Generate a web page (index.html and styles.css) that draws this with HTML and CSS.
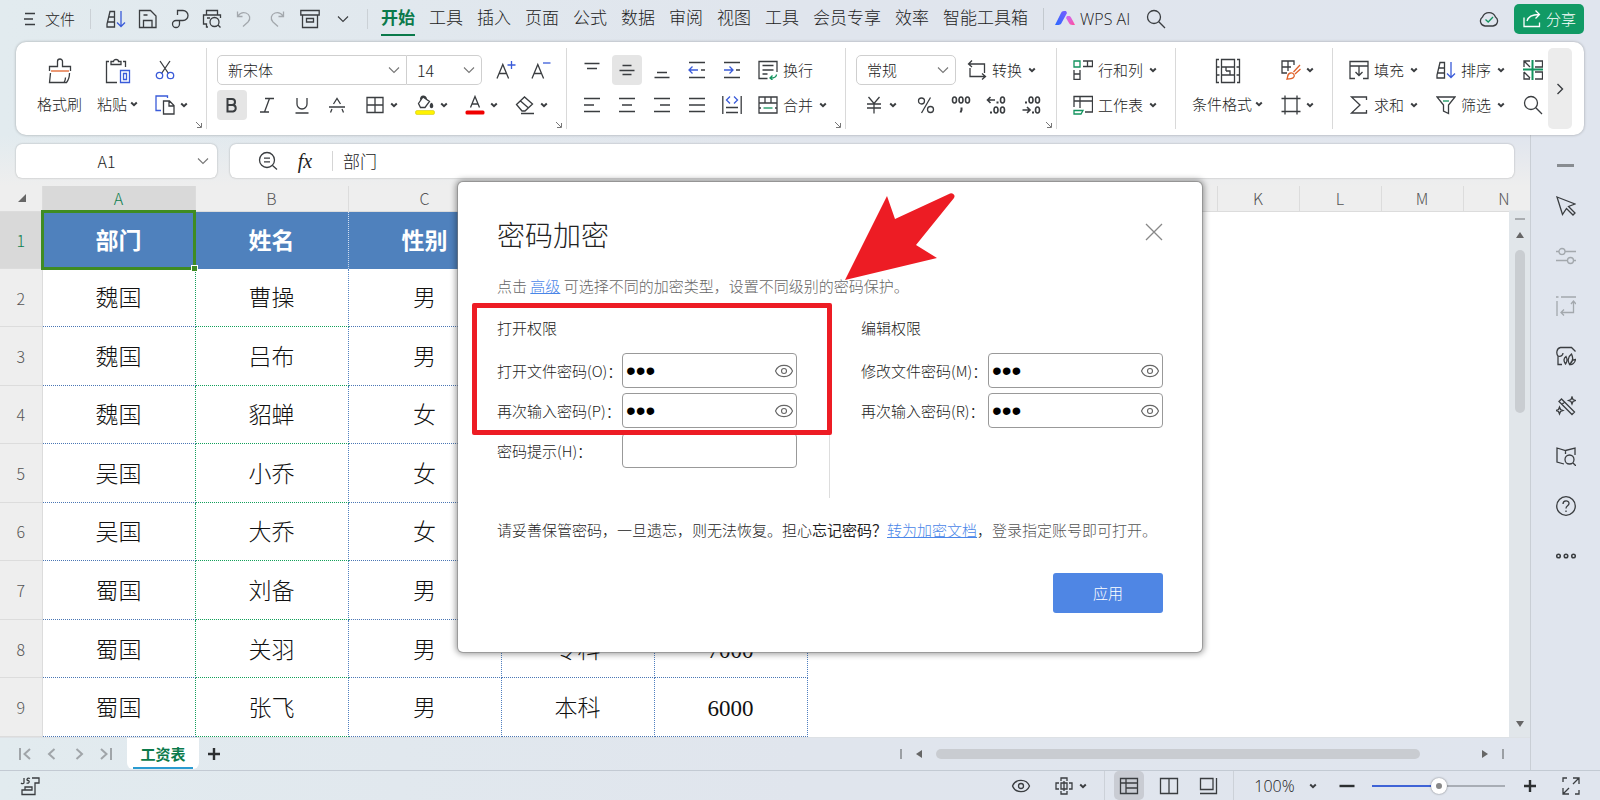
FILE: index.html
```html
<!DOCTYPE html>
<html lang="zh-CN">
<head>
<meta charset="UTF-8">
<title>工资表</title>
<link rel="stylesheet" href="styles.css">
</head>
<body>
<!-- Icon sprite -->
<svg class="sprite" aria-hidden="true">
<defs>
<linearGradient id="ai-blue" x1="0" y1="1" x2="1" y2="0"><stop offset="0" stop-color="#2b6bff"/><stop offset="1" stop-color="#7a5cff"/></linearGradient>
<linearGradient id="ai-pink" x1="0" y1="0" x2="1" y2="1"><stop offset="0" stop-color="#c86bff"/><stop offset="1" stop-color="#ff4f9a"/></linearGradient>
</defs>
<symbol id="caret" viewBox="0 0 8 8"><path d="M1.2 2.6 4 5.2 6.8 2.6" stroke-width="2"/></symbol>
<symbol id="chevron" viewBox="0 0 12 12"><path d="M1 3.5 6 8.5 11 3.5"/></symbol>
<symbol id="launcher" viewBox="0 0 8 8"><path d="M1 1 6 6M6.5 2V6.5H2"/></symbol>
<symbol id="menu" viewBox="0 0 20 20"><path d="M5 4.5H15M4 10H13M5 15.5H15"/></symbol>
<symbol id="sort" viewBox="0 0 20 20"><path d="M1 18V15L4 2.500H8.500V18ZM3 8H8.500M2 13H8.500"/><path class="blue" d="M15 2V17M11 13.500 15 17.500 19 13.500"/></symbol>
<symbol id="save" viewBox="0 0 20 20"><path d="M1.500 1.500H12.500L18 7V18.500H1.500ZM5.500 18V11.500H14V18M5.500 6H9.500"/></symbol>
<symbol id="pdf" viewBox="0 0 20 20"><path d="M7.500 6V1.500H13A5 5 0 0 1 13 11.500H6A3.500 3.500 0 1 0 9.500 15V11.500"/></symbol>
<symbol id="preview" viewBox="0 0 20 20"><path d="M4.500 6V1.500H15.500V6M6 18H4.500V15H1.500V6H18.500V9M5 9H8M16 16 18.500 18.500"/><circle cx="12.500" cy="13" r="4.500"/></symbol>
<symbol id="undo" viewBox="0 0 20 20"><path d="M3.500 2.500V7.500H8.500M4 7C6 4 9 3 12 4C16 5.500 17 10 14 13L9 17.500"/></symbol>
<symbol id="redo" viewBox="0 0 20 20"><path d="M16.500 2.500V7.500H11.500M16 7C14 4 11 3 8 4C4 5.500 3 10 6 13L11 17.500"/></symbol>
<symbol id="archive" viewBox="0 0 20 20"><path d="M.8 1.500H19.200V6H.8ZM2.500 6V18.500H17.500V6M6.500 9.500H13.500V13H6.500Z"/></symbol>
<symbol id="search" viewBox="0 0 20 20"><circle cx="8" cy="8" r="6.500"/><path d="M12.800 12.800 19 19"/></symbol>
<symbol id="cloud" viewBox="0 0 20 20"><path d="M6 17A5 5 0 0 1 3.500 8A7 7 0 0 1 16.500 8A5 5 0 0 1 14 17Z"/><path class="green" d="M6.500 10.500 9.200 13 14 8"/></symbol>
<symbol id="share" viewBox="0 0 20 20"><path d="M2 8.500V17.500H17.500V13.500M5 12C6 8 9 5.500 17 5.500M13.500 1.500 17.500 5.500 13.500 9.500"/></symbol>
<symbol id="painter" viewBox="0 0 26 26"><path d="M2.500 13V8.500H10.500V3.500A2.500 2.500 0 0 1 15.500 3.500V8.500H23.500V13M3.500 15 2.500 24.500H19.500C21.500 22 22.500 19 22.500 15M17 24.500C18 23 18.500 21.500 18.500 19.500"/><path class="orange" d="M4 13H22"/></symbol>
<symbol id="paste" viewBox="0 0 26 26"><path d="M4 3.500H1.500V24.500H12M18 3.500H20.500V9M6 6.500V3.500H8.500C8.500 .8 13.500 .8 13.500 3.500H16V6.500Z"/><path class="blue" d="M15.500 12.500H24.500V24.500H15.500ZM18.500 15.500H21.500V21.500H18.500Z"/></symbol>
<symbol id="cut" viewBox="0 0 20 20"><path d="M5 1 13.500 13.500M15 1 6.500 13.500"/><circle class="blue" cx="4.500" cy="15.500" r="3.200"/><circle class="blue" cx="15.500" cy="15.500" r="3.200"/></symbol>
<symbol id="copy" viewBox="0 0 20 20"><path class="blue" d="M12.500 3V1H1V15.500H6"/><path d="M8.500 6H14.500L19 10.500V19H8.500ZM14 6.500V11H19"/></symbol>
<symbol id="bigger" viewBox="0 0 20 20"><path d="M1 18.500 6.800 4.500 12.600 18.500M3.200 13.500H10.400"/><path class="blue" d="M11.500 5H19.500M15.500 1V9"/></symbol>
<symbol id="smaller" viewBox="0 0 20 20"><path d="M1 18.500 6.800 4.500 12.600 18.500M3.200 13.500H10.400"/><path class="blue" d="M12 3H19.500"/></symbol>
<symbol id="bold" viewBox="0 0 20 20"><path stroke-width="2" d="M5.500 4V16.500H11A3.300 3.300 0 0 0 11 10H5.500H10A3 3 0 0 0 10 4Z"/></symbol>
<symbol id="italic" viewBox="0 0 20 20"><path d="M8 3.500H17M3 17H12M12.500 3.500 7.500 17"/></symbol>
<symbol id="underline" viewBox="0 0 20 20"><path d="M5 3V9A5 5 0 0 0 15 9V3M3.500 18H16.500"/></symbol>
<symbol id="strike" viewBox="0 0 20 20"><path d="M6.500 9 10 3.500 13.500 9M2 12H18M5 14 3.500 17.500M15 14 16.500 17.500"/></symbol>
<symbol id="borders" viewBox="0 0 20 20"><path d="M2 2.500H18V17.500H2ZM10 2.500V17.500M2 10H18"/></symbol>
<symbol id="fill-color" viewBox="0 0 20 20"><path d="M8 2 14.500 6.500 10 12.500H5.500L3.500 8.500ZM5.500 4.500C6 .5 10 0 11.500 4"/><path class="solid" d="M16.500 8C14.500 11 15.500 12.500 16.500 12.500S18.500 11 16.500 8"/><rect class="yellow" x=".5" y="15.500" width="19" height="4" rx="1.500"/></symbol>
<symbol id="font-color" viewBox="0 0 20 20"><path d="M5.500 12.500 10 1.500 14.500 12.500M7 9H13"/><rect class="red" x=".5" y="15.500" width="19" height="4" rx="1.500"/></symbol>
<symbol id="eraser" viewBox="0 0 20 20"><path d="M1.500 9.500 9.500 2 17.500 9 10 16H7ZM5.500 6 13.500 13M6 18.500H19"/></symbol>
<symbol id="v-top" viewBox="0 0 20 20"><path d="M2.500 3.500H17.500M5 8.500H15"/></symbol>
<symbol id="v-mid" viewBox="0 0 20 20"><path d="M5.500 5.500H14.500M2.500 10.500H17.500M5.500 14.500H14.500"/></symbol>
<symbol id="v-bottom" viewBox="0 0 20 20"><path d="M5 12.500H15M2.500 17.500H17.500"/></symbol>
<symbol id="outdent" viewBox="0 0 20 20"><path d="M2 2.500H18M14 10H18M2 17.500H18"/><path class="blue" d="M11 10H2M5.500 6.500 2 10 5.500 13.500"/></symbol>
<symbol id="indent" viewBox="0 0 20 20"><path d="M2 2.500H18M14 10H18M2 17.500H18"/><path class="blue" d="M2 10H11M7.500 6.500 11 10 7.500 13.500"/></symbol>
<symbol id="a-left" viewBox="0 0 20 20"><path d="M2 3.500H18M2 10H12M2 16.500H18"/></symbol>
<symbol id="a-center" viewBox="0 0 20 20"><path d="M2 3.500H18M5 10H15M2 16.500H18"/></symbol>
<symbol id="a-right" viewBox="0 0 20 20"><path d="M2 3.500H18M8 10H18M2 16.500H18"/></symbol>
<symbol id="a-justify" viewBox="0 0 20 20"><path d="M2 3.500H18M2 10H18M2 16.500H18"/></symbol>
<symbol id="distribute" viewBox="0 0 20 20"><path d="M.8 1V19M19.200 1V19M4 12.500H16M4 17.500H16"/><path class="blue" d="M8 1.500 4.500 5 8 8.500M12 1.500 15.500 5 12 8.500"/></symbol>
<symbol id="wrap" viewBox="0 0 20 20"><path d="M9.500 18.500H1V1.500H19V12M4.500 5.500H15.500M4.500 10H15.500M4.500 14H9.500"/><path class="green" d="M18.500 14.500C18.500 17.500 16 18 12.500 18M14.500 15.500 12 18 14.500 20"/></symbol>
<symbol id="merge" viewBox="0 0 20 20"><path d="M1 2H19V18H1ZM1 8H19M7 2V8M13 2V8M1 13H3M17 13H19"/><path class="green" d="M5.500 13H14.500"/></symbol>
<symbol id="convert" viewBox="0 0 20 20"><path d="M5 .5 1.500 4 5 7M2 4H17.500V13M15 13.500 18.500 16.500 15 19.500M18 16.500H3V8"/></symbol>
<symbol id="yuan" viewBox="0 0 20 20"><path d="M4.500 2 10 8.500 15.500 2M3 9H17M3 13H17M10 9V18.500"/></symbol>
<symbol id="percent" viewBox="0 0 20 20"><circle cx="5.500" cy="6" r="3"/><circle cx="14.500" cy="14.500" r="3"/><path d="M14.500 2.500 5.500 18"/></symbol>
<symbol id="thousand" viewBox="0 0 20 20"><g stroke-width="1.600"><ellipse cx="3.500" cy="5" rx="2" ry="3"/><ellipse cx="10" cy="5" rx="2" ry="3"/><ellipse cx="16.500" cy="5" rx="2" ry="3"/></g><path stroke-width="2" d="M10.500 12.500V15L9.500 17.500"/></symbol>
<symbol id="inc-decimal" viewBox="0 0 20 20"><g stroke-width="1.600"><path d="M9 5H1.500M4.500 2 1.500 5 4.500 8"/><ellipse cx="16.500" cy="5" rx="2" ry="3"/><ellipse cx="10" cy="15" rx="2" ry="3"/><ellipse cx="16.500" cy="15" rx="2" ry="3"/></g><path stroke-width="2" d="M11.500 6.500V8.500M5 16.500V18.500"/></symbol>
<symbol id="dec-decimal" viewBox="0 0 20 20"><g stroke-width="1.600"><path d="M1.500 15H9M6 12 9 15 6 18"/><ellipse cx="16.500" cy="15" rx="2" ry="3"/><ellipse cx="10" cy="5" rx="2" ry="3"/><ellipse cx="16.500" cy="5" rx="2" ry="3"/></g><path stroke-width="2" d="M12 16.500V18.500M5 6.500V8.500"/></symbol>
<symbol id="rows-cols" viewBox="0 0 20 20"><path class="green" d="M1 1H7V7H1Z"/><path d="M10 1H19.500V6.500H10M14.500 1V6.500M1 10V19.500H7V10M1 14H7"/></symbol>
<symbol id="worksheet" viewBox="0 0 20 20"><path d="M1 12V1.500H19.500V17H12M1 6H19.500M7 1.500V13"/><path class="green" d="M1 15.500H10L8 19H1Z"/></symbol>
<symbol id="condition" viewBox="0 0 26 26"><path d="M4 1.500H1.500V24.500H4M22 1.500H24.500V24.500H22M1.500 9H4.500M1.500 17H4.500M21.500 9H24.500M21.500 17H24.500M6.500 1.500H19.500V9H6.500ZM6.500 9V17H19.500V9M11 13V9M11 13H15V17M6.500 17V24.500H19.500V17"/></symbol>
<symbol id="table-style" viewBox="0 0 20 20"><path d="M6 13H1V1H13V5M1 7H10M7 1V11"/><path class="orange" d="M19 5 12.500 12M19.500 9 14 14M6 19C7 17 6 13.500 9.500 13C12.500 12.500 14.500 15.500 12.500 17.500C11 19 8.500 19 6 19Z"/></symbol>
<symbol id="frame" viewBox="0 0 20 20"><path d="M4 .5V19.500M16 .5V19.500M.5 3.500H19.500M.5 16.500H19.500"/></symbol>
<symbol id="fill" viewBox="0 0 20 20"><path d="M6 18.500H1V1.500H19V18.500H14M1 6H19M10 6V15.500M6.500 12 10 15.500 13.500 12"/></symbol>
<symbol id="sum" viewBox="0 0 20 20"><path d="M17.500 5V2H2.500L11 10 2.500 18H17.500V15"/></symbol>
<symbol id="filter" viewBox="0 0 20 20"><path d="M1 2H19L12.500 10V18.500L7.500 16V10Z"/><path class="green" d="M7 6H13"/></symbol>
<symbol id="freeze" viewBox="0 0 20 20"><path d="M1 7V1H7M12 1H19.500V7H12M1 12V19H7M12 12H19.500V19H12M1 1 7 7M1 12 7 18"/><path class="green" stroke-width="2" d="M0 9.500H20M9.500 0V20"/></symbol>
<symbol id="eye" viewBox="0 0 20 20"><path d="M1.500 10C4.500 2.500 15.500 2.500 18.500 10C15.500 17.500 4.500 17.500 1.500 10Z"/><circle cx="10" cy="10" r="2.500"/></symbol>
<symbol id="focus" viewBox="0 0 20 20"><path d="M7 5V2H13V5M7 15V18H13V15M5 7H2V13H5M15 7H18V13H15M7 7H13V13H7ZM10 5V15"/></symbol>
<symbol id="v-normal" viewBox="0 0 20 20"><path d="M1.500 2.500H18.500V17.500H1.500ZM1.500 7H18.500M7 2.500V17.500M7 12H18.500"/></symbol>
<symbol id="v-page" viewBox="0 0 20 20"><path d="M1.500 2.500H18.500V17.500H1.500ZM10 2.500V17.500"/></symbol>
<symbol id="v-break" viewBox="0 0 20 20"><path d="M1.500 2.500H14V13.500H1.500ZM17.500 2V17.500H1"/></symbol>
<symbol id="expand" viewBox="0 0 20 20"><path d="M12 2H18V8M18 2 12 8M8 18H2V12M2 18 8 12M2 6V2H6M18 14V18H14"/></symbol>
<symbol id="fx-search" viewBox="0 0 20 20"><circle cx="9" cy="9" r="7.500"/><path d="M14.500 14.500 19 18.500M6 7.200H12M6 10.800H12"/></symbol>
<symbol id="cursor" viewBox="0 0 20 20"><path d="M1 1 19 8 12.500 10.500 19 17 17 19 10.500 12.500 6.500 18.500Z"/></symbol>
<symbol id="sliders" viewBox="0 0 20 20"><path d="M0 5.500H3M9 5.500H20M0 14.500H11.500M17.500 14.500H20"/><circle cx="6" cy="5.500" r="3"/><circle cx="14.500" cy="14.500" r="3"/></symbol>
<symbol id="transform" viewBox="0 0 20 20"><path d="M5 1H20M1 5V20M0 1H2.500M17.500 6V16.500H5M15 8 17.500 5 20 8M8 13.500 5 16.500 8 19.500"/></symbol>
<symbol id="beauty" viewBox="0 0 20 20"><path d="M6 18.500H2V10C0 8 .5 2 4.500 1.500H15.500L19.500 5.500M2 10C5 11 7 9 7 7M9.500 18C7 15 8 12 10 10.500C11.500 13 11 16 9.500 18ZM13.500 18.500C11 14 13 10 15.500 8C17.500 12 16.500 16 13.500 18.500ZM14 18.500C16 19 19 17 19.500 13.500C17.500 13.500 16 14.500 15 16"/></symbol>
<symbol id="wand" viewBox="0 0 20 20"><path d="M3 5.500 5.500 3 18.500 16 16 18.500ZM6 8.500 8.500 6M16 1 17 3.500 19.500 4.500 17 5.500 16 8 15 5.500 12.500 4.500 15 3.500ZM3.500 11 4.500 13.500 7 14.500 4.500 15.500 3.500 18 2.500 15.500 0 14.500 2.500 13.500Z"/></symbol>
<symbol id="book" viewBox="0 0 20 20"><path d="M8 18 1 16V2L9.500 4.500 19 2V9M9.500 4.500V8M17 17 20 20"/><circle cx="13.500" cy="13.500" r="4.500"/></symbol>
<symbol id="help" viewBox="0 0 20 20"><circle cx="10" cy="10" r="9.300"/><path d="M7 8C7 4 13 4 13 7.500C13 10 10 9.500 10 12.500M10 14.500V16"/></symbol>
<symbol id="more" viewBox="0 0 20 20"><g stroke-width="1.500"><circle cx="2.500" cy="10" r="1.800"/><circle cx="10" cy="10" r="1.800"/><circle cx="17.500" cy="10" r="1.800"/></g></symbol>
<symbol id="macro" viewBox="0 0 20 20"><path d="M4 2V6.500C4 8 2 8 1 7M10 2.500C7 1 6 4.500 8 4.500S9.500 8 6.500 7M12 2H19V7H15V18.500H2V14H5V11H12V14H3"/></symbol>
</svg>

<header class="menubar">
<button class="file"><svg class="icon"><use href="#menu"/></svg>文件</button>
<div class="quick">
<button aria-label="排序"><svg class="icon"><use href="#sort"/></svg></button>
<button aria-label="保存"><svg class="icon"><use href="#save"/></svg></button>
<button aria-label="输出PDF"><svg class="icon"><use href="#pdf"/></svg></button>
<button aria-label="打印预览"><svg class="icon"><use href="#preview"/></svg></button>
<button class="off" aria-label="撤销"><svg class="icon"><use href="#undo"/></svg></button>
<button class="off" aria-label="恢复"><svg class="icon"><use href="#redo"/></svg></button>
<button aria-label="归档"><svg class="icon"><use href="#archive"/></svg></button>
<button class="custom" aria-label="更多命令"><svg class="chevron"><use href="#chevron"/></svg></button>
</div>
<nav class="menu">
<a class="current" href="#">开始</a>
<a href="#">工具</a>
<a href="#">插入</a>
<a href="#">页面</a>
<a href="#">公式</a>
<a href="#">数据</a>
<a href="#">审阅</a>
<a href="#">视图</a>
<a href="#">工具</a>
<a href="#">会员专享</a>
<a href="#">效率</a>
<a href="#">智能工具箱</a>
</nav>
<button class="ai"><svg class="logo" viewBox="0 0 20 18"><path fill="url(#ai-blue)" d="M0 15 6 3C7 1 8 1 11 1L12 3 6.500 13C5.500 15 4 15 0 15Z"/><path fill="url(#ai-pink)" d="M12 6H14C15.500 6 16 7 20 15C16.500 15 15 15 14 13L11 8Z"/></svg>WPS AI</button>
<button class="find" aria-label="搜索"><svg class="icon"><use href="#search"/></svg></button>
<div class="account">
<button aria-label="已同步"><svg class="icon"><use href="#cloud"/></svg></button>
<button class="share"><svg class="icon"><use href="#share"/></svg>分享</button>
</div>
</header>

<section class="ribbon">
<div class="group clipboard">
<button class="big"><svg class="icon-lg"><use href="#painter"/></svg><span>格式刷</span></button>
<button class="big"><svg class="icon-lg"><use href="#paste"/></svg><span>粘贴<svg class="caret"><use href="#caret"/></svg></span></button>
<div class="stack">
<button class="pair" aria-label="剪切"><svg class="icon"><use href="#cut"/></svg></button>
<button class="pair" aria-label="复制"><svg class="icon"><use href="#copy"/></svg><svg class="caret"><use href="#caret"/></svg></button>
</div>
<svg class="launcher"><use href="#launcher"/></svg>
</div>

<div class="group font">
<div class="stack">
<div class="row">
<div class="combos">
<label class="combo name"><select aria-label="字体"><option>新宋体</option></select><svg class="chevron"><use href="#chevron"/></svg></label>
<label class="combo size"><select aria-label="字号"><option>14</option></select><svg class="chevron"><use href="#chevron"/></svg></label>
</div>
<button class="tool" aria-label="增大字号"><svg class="icon"><use href="#bigger"/></svg></button>
<button class="tool" aria-label="减小字号"><svg class="icon"><use href="#smaller"/></svg></button>
</div>
<div class="row">
<button class="tool on" aria-label="加粗"><svg class="icon"><use href="#bold"/></svg></button>
<button class="tool" aria-label="倾斜"><svg class="icon"><use href="#italic"/></svg></button>
<button class="tool" aria-label="下划线"><svg class="icon"><use href="#underline"/></svg></button>
<button class="tool" aria-label="删除线"><svg class="icon"><use href="#strike"/></svg></button>
<button class="tool drop" aria-label="边框"><svg class="icon"><use href="#borders"/></svg><svg class="caret"><use href="#caret"/></svg></button>
<button class="tool drop" aria-label="填充颜色"><svg class="icon"><use href="#fill-color"/></svg><svg class="caret"><use href="#caret"/></svg></button>
<button class="tool drop" aria-label="字体颜色"><svg class="icon"><use href="#font-color"/></svg><svg class="caret"><use href="#caret"/></svg></button>
<button class="tool drop" aria-label="清除"><svg class="icon"><use href="#eraser"/></svg><svg class="caret"><use href="#caret"/></svg></button>
</div>
</div>
<svg class="launcher"><use href="#launcher"/></svg>
</div>

<div class="group align">
<div class="stack">
<div class="row">
<button class="tool" aria-label="顶端对齐"><svg class="icon"><use href="#v-top"/></svg></button>
<button class="tool on" aria-label="垂直居中"><svg class="icon"><use href="#v-mid"/></svg></button>
<button class="tool" aria-label="底端对齐"><svg class="icon"><use href="#v-bottom"/></svg></button>
<button class="tool" aria-label="减少缩进"><svg class="icon"><use href="#outdent"/></svg></button>
<button class="tool" aria-label="增加缩进"><svg class="icon"><use href="#indent"/></svg></button>
<button class="text"><svg class="icon"><use href="#wrap"/></svg>换行</button>
</div>
<div class="row">
<button class="tool" aria-label="左对齐"><svg class="icon"><use href="#a-left"/></svg></button>
<button class="tool" aria-label="居中"><svg class="icon"><use href="#a-center"/></svg></button>
<button class="tool" aria-label="右对齐"><svg class="icon"><use href="#a-right"/></svg></button>
<button class="tool" aria-label="两端对齐"><svg class="icon"><use href="#a-justify"/></svg></button>
<button class="tool" aria-label="分散对齐"><svg class="icon"><use href="#distribute"/></svg></button>
<button class="text"><svg class="icon"><use href="#merge"/></svg>合并<svg class="caret"><use href="#caret"/></svg></button>
</div>
</div>
<svg class="launcher"><use href="#launcher"/></svg>
</div>

<div class="group number">
<div class="stack">
<div class="row">
<label class="combo format"><select aria-label="数字格式"><option>常规</option></select><svg class="chevron"><use href="#chevron"/></svg></label>
<button class="text"><svg class="icon"><use href="#convert"/></svg>转换<svg class="caret"><use href="#caret"/></svg></button>
</div>
<div class="row">
<button class="tool drop currency" aria-label="货币"><svg class="icon"><use href="#yuan"/></svg><svg class="caret"><use href="#caret"/></svg></button>
<button class="tool" aria-label="百分比"><svg class="icon"><use href="#percent"/></svg></button>
<button class="tool" aria-label="千位分隔"><svg class="icon"><use href="#thousand"/></svg></button>
<button class="tool" aria-label="增加小数位"><svg class="icon"><use href="#inc-decimal"/></svg></button>
<button class="tool" aria-label="减少小数位"><svg class="icon"><use href="#dec-decimal"/></svg></button>
</div>
</div>
<svg class="launcher"><use href="#launcher"/></svg>
</div>

<div class="group plain">
<div class="stack">
<button class="text"><svg class="icon"><use href="#rows-cols"/></svg>行和列<svg class="caret"><use href="#caret"/></svg></button>
<button class="text"><svg class="icon"><use href="#worksheet"/></svg>工作表<svg class="caret"><use href="#caret"/></svg></button>
</div>
</div>

<div class="group plain">
<button class="big"><svg class="icon-lg"><use href="#condition"/></svg><span>条件格式<svg class="caret"><use href="#caret"/></svg></span></button>
<div class="stack">
<button class="pair" aria-label="表格样式"><svg class="icon"><use href="#table-style"/></svg><svg class="caret"><use href="#caret"/></svg></button>
<button class="pair" aria-label="单元格样式"><svg class="icon"><use href="#frame"/></svg><svg class="caret"><use href="#caret"/></svg></button>
</div>
</div>

<div class="group plain last">
<div class="stack">
<button class="text"><svg class="icon"><use href="#fill"/></svg>填充<svg class="caret"><use href="#caret"/></svg></button>
<button class="text"><svg class="icon"><use href="#sum"/></svg>求和<svg class="caret"><use href="#caret"/></svg></button>
</div>
<div class="stack">
<button class="text"><svg class="icon"><use href="#sort"/></svg>排序<svg class="caret"><use href="#caret"/></svg></button>
<button class="text"><svg class="icon"><use href="#filter"/></svg>筛选<svg class="caret"><use href="#caret"/></svg></button>
</div>
<div class="stack">
<button class="pair" aria-label="冻结"><svg class="icon"><use href="#freeze"/></svg></button>
<button class="pair" aria-label="查找"><svg class="icon"><use href="#search"/></svg></button>
</div>
</div>
<button class="scroll-right" aria-label="更多工具"><svg class="chevron turn"><use href="#chevron"/></svg></button>
</section>

<main class="workspace">
<div class="editor">
<div class="formula-bar">
<div class="name-box"><input type="text" value="A1" aria-label="名称框"><button aria-label="名称列表"><svg class="chevron"><use href="#chevron"/></svg></button></div>
<div class="formula">
<button aria-label="查找公式"><svg class="icon"><use href="#fx-search"/></svg></button>
<button class="fx">fx</button>
<input type="text" value="部门" aria-label="编辑栏">
</div>
</div>

<div class="sheet">
<div class="grid-pane">
<table class="grid">
<colgroup><col class="num"><col class="wide" span="5"><col class="std" span="9"></colgroup>
<thead>
<tr><th class="corner"><svg viewBox="0 0 8 8"><path d="M8 0V8H0Z"/></svg></th><th class="sel">A</th><th>B</th><th>C</th><th>D</th><th>E</th><th>F</th><th>G</th><th>H</th><th>I</th><th>J</th><th>K</th><th>L</th><th>M</th><th>N</th></tr>
</thead>
<tbody>
<tr class="title"><th class="sel">1</th><td class="active">部门</td><td>姓名</td><td>性别</td><td>学历</td><td>工资</td></tr>
<tr><th>2</th><td>魏国</td><td>曹操</td><td>男</td><td></td><td></td></tr>
<tr><th>3</th><td>魏国</td><td>吕布</td><td>男</td><td></td><td></td></tr>
<tr><th>4</th><td>魏国</td><td>貂蝉</td><td>女</td><td></td><td></td></tr>
<tr><th>5</th><td>吴国</td><td>小乔</td><td>女</td><td></td><td></td></tr>
<tr><th>6</th><td>吴国</td><td>大乔</td><td>女</td><td></td><td></td></tr>
<tr><th>7</th><td>蜀国</td><td>刘备</td><td>男</td><td></td><td></td></tr>
<tr><th>8</th><td>蜀国</td><td>关羽</td><td>男</td><td>专科</td><td>7000</td></tr>
<tr><th>9</th><td>蜀国</td><td>张飞</td><td>男</td><td>本科</td><td>6000</td></tr>
</tbody>
</table>
</div>
<div class="vscroll">
<span class="split"></span>
<span class="arrow up"></span>
<span class="thumb"></span>
<span class="arrow down"></span>
</div>
</div>

<div class="tabs">
<button class="step" aria-label="第一张"><svg class="icon" viewBox="0 0 20 20"><path d="M5 4V16M15 5 9.500 10 15 15"/></svg></button>
<button class="step" aria-label="上一张"><svg class="icon" viewBox="0 0 20 20"><path d="M12.500 5 7 10 12.500 15"/></svg></button>
<button class="step" aria-label="下一张"><svg class="icon" viewBox="0 0 20 20"><path d="M7.500 5 13 10 7.500 15"/></svg></button>
<button class="step" aria-label="最后一张"><svg class="icon" viewBox="0 0 20 20"><path d="M5 5 10.500 10 5 15M15 4V16"/></svg></button>
<button class="tab">工资表</button>
<button class="add" aria-label="新建工作表"><svg class="icon" viewBox="0 0 20 20"><path d="M4 10H16M10 4V16"/></svg></button>
<div class="hscroll">
<span class="grip"></span>
<span class="arrow left"></span>
<span class="track"><span class="thumb"></span></span>
<span class="arrow right"></span>
<span class="grip"></span>
</div>
</div>
</div>

<aside class="sidebar">
<button class="fold" aria-label="收起"><span></span></button>
<button aria-label="选择"><svg class="icon"><use href="#cursor"/></svg></button>
<button class="off" aria-label="属性"><svg class="icon"><use href="#sliders"/></svg></button>
<button class="off" aria-label="变换"><svg class="icon"><use href="#transform"/></svg></button>
<button aria-label="美化"><svg class="icon"><use href="#beauty"/></svg></button>
<button aria-label="工具"><svg class="icon"><use href="#wand"/></svg></button>
<button aria-label="文档检索"><svg class="icon"><use href="#book"/></svg></button>
<button aria-label="帮助"><svg class="icon"><use href="#help"/></svg></button>
<button aria-label="更多"><svg class="icon"><use href="#more"/></svg></button>
</aside>
</main>

<footer class="status">
<button class="macro" aria-label="宏"><svg class="icon"><use href="#macro"/></svg></button>
<button aria-label="护眼模式"><svg class="icon"><use href="#eye"/></svg></button>
<button class="pair reading" aria-label="阅读模式"><svg class="icon"><use href="#focus"/></svg><svg class="caret"><use href="#caret"/></svg></button>
<div class="views">
<button class="on" aria-label="普通视图"><svg class="icon"><use href="#v-normal"/></svg></button>
<button aria-label="页面布局"><svg class="icon"><use href="#v-page"/></svg></button>
<button aria-label="分页预览"><svg class="icon"><use href="#v-break"/></svg></button>
</div>
<button class="percent">100%<svg class="caret"><use href="#caret"/></svg></button>
<div class="zoom">
<button class="heavy" aria-label="缩小"><svg class="icon" viewBox="0 0 20 20"><path d="M2.500 10H17.500"/></svg></button>
<input type="range" min="0" max="100" value="50" aria-label="缩放">
<button class="heavy" aria-label="放大"><svg class="icon" viewBox="0 0 20 20"><path d="M4 10H16M10 4V16"/></svg></button>
</div>
<button aria-label="全屏"><svg class="icon"><use href="#expand"/></svg></button>
</footer>

<!-- Password dialog -->
<div class="dialog" role="dialog" aria-labelledby="dialog-title">
<div class="dialog-head">
<h2 id="dialog-title">密码加密</h2>
<button aria-label="关闭"><svg viewBox="0 0 18 18"><path d="M1 1 17 17M17 1 1 17"/></svg></button>
</div>
<p class="hint">点击 <a href="#">高级</a> 可选择不同的加密类型，设置不同级别的密码保护。</p>
<div class="columns">
<fieldset class="open">
<legend>打开权限</legend>
<div class="field"><label for="pw-open">打开文件密码(O)：</label><div class="box"><input type="password" id="pw-open" value="abc"><button aria-label="显示密码"><svg class="icon"><use href="#eye"/></svg></button></div></div>
<div class="field"><label for="pw-open2">再次输入密码(P)：</label><div class="box"><input type="password" id="pw-open2" value="abc"><button aria-label="显示密码"><svg class="icon"><use href="#eye"/></svg></button></div></div>
<div class="field"><label for="pw-tip">密码提示(H)：</label><div class="box"><input type="text" id="pw-tip"></div></div>
</fieldset>
<fieldset class="edit">
<legend>编辑权限</legend>
<div class="field"><label for="pw-edit">修改文件密码(M)：</label><div class="box"><input type="password" id="pw-edit" value="abc"><button aria-label="显示密码"><svg class="icon"><use href="#eye"/></svg></button></div></div>
<div class="field"><label for="pw-edit2">再次输入密码(R)：</label><div class="box"><input type="password" id="pw-edit2" value="abc"><button aria-label="显示密码"><svg class="icon"><use href="#eye"/></svg></button></div></div>
</fieldset>
</div>
<p class="note">请妥善保管密码，一旦遗忘，则无法恢复。担心<b>忘记密码？</b><a href="#">转为加密文档</a>，<span>登录指定账号即可打开。</span></p>
<button class="apply">应用</button>
<div class="mark-box"></div>
<svg class="mark-arrow" viewBox="0 0 114 92"><path d="M1 90 43 6 51 29 105 4C108 2 112 5 110 8L72 55 93 68Z"/></svg>
</div>
</body>
</html>
```
FILE: styles.css
```css
* {
    box-sizing: border-box;
}
body {
    margin: 0;
    min-height: 100vh;
    display: flex;
    flex-direction: column;
    position: relative;
    overflow: hidden;
    background: linear-gradient(90deg, #e2ebef 0%, #e0e5ed 50%, #e0e5ee 100%);
    font-family: "Noto Sans CJK SC", "Noto Sans", sans-serif;
    font-size: 15px;
    font-weight: 300;
    line-height: 20px;
    color: #222;
}
button, input, select {
    font: inherit;
    color: inherit;
    background: none;
    border: none;
    padding: 0;
    margin: 0;
    outline: none;
}
button {
    display: inline-flex;
    align-items: center;
    justify-content: center;
    white-space: nowrap;
    flex-shrink: 0;
    cursor: pointer;
}
svg {
    display: block;
    flex-shrink: 0;
    fill: none;
    stroke: #3a3d40;
    stroke-width: 1.3;
}
.sprite {
    position: absolute;
    width: 0;
    height: 0;
}
.icon {
    width: 20px;
    height: 20px;
}
.icon-lg {
    width: 26px;
    height: 26px;
}
.chevron {
    width: 12px;
    height: 12px;
    stroke-width: 1.1;
}
.caret {
    width: 8px;
    height: 8px;
}
.blue { stroke: #3a5bd9; }
.green { stroke: #12935e; }
.orange { stroke: #e0622a; }
.solid { fill: #3a3d40; }
.yellow { fill: #fff200; stroke: #c9c400; stroke-width: .5; }
.red { fill: #f00000; stroke: none; }
.off svg { stroke: #a3a8ad; }

/* Menu bar */
.menubar {
    display: flex;
    align-items: center;
    height: 42px;
    padding: 0 16px 4px 20px;
    font-size: 17px;
}
.file {
    font-size: 15px;
    gap: 5px;
    padding-right: 15px;
    border-right: 1px solid #cbd1d6;
}
.quick {
    display: flex;
    align-items: center;
    gap: 12px;
    padding: 0 18px 0 15px;
    border-right: 1px solid #cbd1d6;
}
.quick .off {
    margin-right: 1px;
}
.custom {
    margin-left: 5px;
}
.menu {
    display: flex;
    gap: 14px;
    padding: 0 15px 0 13px;
    border-right: 1px solid #c3c9cf;
}
.menu a {
    color: inherit;
    text-decoration: none;
    white-space: nowrap;
    line-height: 30px;
    height: 34px;
    margin: -6px 0;
}
.menu .current {
    color: #0b7a4b;
    font-weight: bold;
    border-bottom: 2px solid #0b7a4b;
}
.ai {
    font-family: "Open Sans", sans-serif;
    font-size: 16px;
    gap: 5px;
    margin-left: 11px;
}
.logo {
    width: 20px;
    height: 18px;
    stroke: none;
}
.find {
    margin-left: 16px;
}
.account {
    display: flex;
    align-items: center;
    gap: 15px;
    margin-left: auto;
}
.share {
    height: 30px;
    padding: 0 8px;
    gap: 4px;
    border-radius: 5px;
    background: #119a65;
    color: #fff;
    font-size: 15px;
}
.share svg {
    stroke: #fff;
}

/* Ribbon */
.ribbon {
    display: flex;
    height: 93px;
    margin: 0 16px;
    padding: 6px 14px 6px 0;
    background: #fff;
    border-radius: 10px;
    box-shadow: 0 0 3px rgba(0, 0, 0, .3);
    position: relative;
}
.group {
    display: flex;
    flex-shrink: 0;
    padding: 7px 18px 0 10px;
    border-right: 1px solid #d9d9d9;
    position: relative;
}
.clipboard {
    padding-left: 21px;
    gap: 15px;
}
.font {
    padding-right: 10px;
}
.number {
    padding-right: 10px;
}
.plain {
    padding-left: 16px;
    gap: 18px;
}
.last {
    border-right: none;
    padding-right: 5px;
}
.stack {
    display: flex;
    flex-direction: column;
    gap: 5px;
}
.clipboard .stack {
    padding-left: 2px;
}
.row {
    display: flex;
    gap: 5px;
}
.big {
    flex-direction: column;
    justify-content: flex-start;
    gap: 10px;
    padding-top: 3px;
    height: 65px;
}
.big span {
    display: flex;
    align-items: center;
    gap: 3px;
}
.tool {
    width: 30px;
    height: 30px;
    border-radius: 4px;
}
.on {
    background: #e5e5e5;
}
.drop {
    width: 45px;
    gap: 5px;
    padding-left: 4px;
}
.pair {
    height: 30px;
    gap: 5px;
    justify-content: flex-start;
}
.text {
    height: 30px;
    gap: 5px;
    justify-content: flex-start;
}
.text .caret {
    margin-left: 1px;
}
.align .text {
    margin-left: 6px;
}
.number .text {
    margin-left: 6px;
}
.currency {
    margin-right: 5px;
}
.combo {
    position: relative;
    display: block;
    height: 30px;
    border: 1px solid #cfcfcf;
    border-radius: 5px;
}
.combo select {
    appearance: none;
    width: 100%;
    height: 28px;
    padding: 0 10px;
}
.combo .chevron {
    position: absolute;
    right: 6px;
    top: 8px;
    pointer-events: none;
}
.combo .chevron, .name-box .chevron {
    stroke: #777;
}
.combos {
    display: flex;
    margin-right: 4px;
}
.name {
    width: 190px;
    border-radius: 5px 0 0 5px;
}
.size {
    width: 75px;
    border-left: none;
    border-radius: 0 5px 5px 0;
    font-size: 16px;
}
.format {
    width: 100px;
}
.launcher {
    position: absolute;
    right: 3px;
    bottom: 0;
    width: 8px;
    height: 8px;
    stroke: #777;
    stroke-width: 1;
}
.scroll-right {
    width: 24px;
    margin-left: auto;
    border-radius: 5px;
    background: #ececec;
}
.turn {
    transform: rotate(-90deg);
    stroke-width: 1.4;
}

/* Formula bar */
.workspace {
    flex: 1;
    display: flex;
    min-height: 0;
}
.editor {
    flex: 1;
    min-width: 0;
    display: flex;
    flex-direction: column;
}
.formula-bar {
    display: flex;
    gap: 13px;
    padding: 9px 16px 8px 16px;
    background: linear-gradient(rgba(238, 238, 238, 0), #eee);
}
.name-box, .formula {
    display: flex;
    align-items: center;
    height: 34px;
    background: #fff;
    border-radius: 6px;
    box-shadow: 0 0 2px rgba(0, 0, 0, .3);
}
.name-box {
    width: 201px;
    padding-right: 8px;
}
.name-box input {
    flex: 1;
    min-width: 0;
    text-align: center;
    font-size: 16px;
    padding-left: 0;
}
.formula {
    flex: 1;
    padding-left: 28px;
}
.formula input {
    flex: 1;
    height: 20px;
    padding-left: 10px;
    border-left: 1px solid #d5d5d5;
    font-size: 17px;
}
.fx {
    width: 54px;
    font-family: "Liberation Serif", serif;
    font-style: italic;
    font-size: 20px;
}

/* Grid */
.sheet {
    flex: 1;
    display: flex;
    min-height: 0;
}
.grid-pane {
    flex: 1;
    overflow: hidden;
    background: #fff;
}
.grid {
    width: 1545px;
    height: 100%;
    table-layout: fixed;
    border-collapse: collapse;
}
.num { width: 42px; }
.wide { width: 153px; }
.std { width: 82px; }
.grid th {
    padding: 0;
    background: #eee;
    color: #555;
    font-weight: inherit;
    font-size: 16px;
    border-right: 1px solid #dcdcdc;
    border-bottom: 1px solid #dcdcdc;
}
.grid thead th {
    height: 25px;
}
.grid th.sel {
    background: #d9d9d9;
    color: #0f7f50;
}
.corner svg {
    width: 8px;
    height: 8px;
    margin-left: 18px;
    fill: #666;
    stroke: none;
}
.grid td {
    padding: 4px 0 0;
    text-align: center;
    font-family: "Liberation Serif", "Noto Sans CJK SC", serif;
    font-size: 23px;
    line-height: 30px;
    color: #111;
    border-right: 1px dotted #4f7fc0;
    border-bottom: 1px dotted #4a76b4;
}
.grid td:nth-child(2) {
    border-right-color: #12a05a;
}
.grid td:nth-child(3) {
    border-bottom-color: #12a05a;
}
.grid .title td {
    background: #4f81bd;
    color: #fff;
    font-weight: bold;
    border-right-color: #d5e2f2;
    border-bottom: none;
}
.grid .title .active {
    outline: 3px solid #3f8c22;
    outline-offset: -2px;
    position: relative;
}
.active::after {
    content: "";
    position: absolute;
    right: -2px;
    bottom: -2px;
    width: 5px;
    height: 5px;
    background: #3f8c22;
    box-shadow: 0 0 0 1px #fff;
}

/* Scroll bars */
.vscroll {
    width: 21px;
    display: flex;
    flex-direction: column;
    align-items: center;
    padding: 32px 0 10px;
    background: linear-gradient(#eee 0, #eee 24px, #e1e6ea 25px);
}
.vscroll .split {
    width: 10px;
    height: 2px;
    background: #a9adb1;
}
.vscroll .thumb {
    width: 10px;
    height: 32%;
    background: #c9cdd1;
    border-radius: 5px;
}
.arrow {
    width: 0;
    height: 0;
    border: 4px solid transparent;
}
.up {
    border-bottom: 6px solid #666;
    border-top: none;
    margin: 12px 0;
}
.down {
    border-top: 6px solid #666;
    border-bottom: none;
    margin-top: auto;
}
.left {
    border-right: 6px solid #666;
    border-left: none;
}
.right {
    border-left: 6px solid #666;
    border-right: none;
}
.hscroll {
    display: flex;
    align-items: center;
    gap: 14px;
    width: 42%;
    margin-left: auto;
    padding: 0 26px 0 8px;
}
.track {
    flex: 1;
}
.hscroll .thumb {
    display: block;
    width: 91%;
    height: 10px;
    border-radius: 5px;
    background: #c9ccd1;
}
.grip {
    width: 2px;
    height: 10px;
    background: #9b9fa4;
}

/* Sheet tabs */
.tabs {
    display: flex;
    height: 33px;
    padding-left: 11px;
    border-top: 1px solid #dde1e5;
}
.step {
    width: 27px;
}
.step svg {
    stroke: #a0a5a9;
    stroke-width: 2;
}
.tab {
    width: 72px;
    margin: 0 5px 1px 8px;
    background: linear-gradient(#2a9bd0, #2a9bd0) center bottom / 60px 2px no-repeat #fff;
    border-radius: 0 0 6px 6px;
    color: #0b7a4b;
    font-weight: bold;
}
.add svg, .heavy svg {
    stroke: #2c2f31;
    stroke-width: 2.4;
}

/* Sidebar */
.sidebar {
    width: 70px;
    display: flex;
    flex-direction: column;
    align-items: center;
    gap: 30px;
    padding-top: 25px;
    border-left: 1px solid #c9ced5;
}
.fold {
    height: 10px;
    margin-bottom: -4px;
}
.fold span {
    width: 17px;
    height: 3px;
    background: #888c91;
}

/* Status bar */
.status {
    display: flex;
    align-items: center;
    height: 30px;
    padding: 0 19px 0 20px;
    border-top: 1px solid #c3cad3;
}
.macro {
    margin-right: auto;
}
.reading {
    margin: 0 17px 0 23px;
}
.views {
    display: flex;
    align-items: center;
    gap: 10px;
    padding: 0 9px;
    border: solid #ccd1d8;
    border-width: 0 1px;
}
.views button {
    width: 30px;
    height: 29px;
    border-radius: 5px;
}
.views .on {
    background: #c9ccd3;
}
.percent {
    width: 63px;
    margin: 0 20px;
    gap: 14px;
    font-family: "Open Sans", sans-serif;
    font-size: 16px;
}
.zoom {
    display: flex;
    align-items: center;
    gap: 15px;
    margin-right: 21px;
}
.zoom input {
    appearance: none;
    width: 133px;
    height: 16px;
}
.zoom input::-webkit-slider-runnable-track {
    height: 2px;
    background: linear-gradient(90deg, #3f63d6 50%, #a8adb5 50%);
}
.zoom input::-webkit-slider-thumb {
    appearance: none;
    width: 16px;
    height: 16px;
    margin-top: -7px;
    border-radius: 50%;
    background: #888;
    border: 5px solid #fff;
    box-shadow: 0 0 2px rgba(0, 0, 0, .5);
}

/* Dialog */
.dialog {
    position: absolute;
    left: 458px;
    top: 182px;
    width: 744px;
    padding: 32px 39px 39px;
    background: #fff;
    border-radius: 5px;
    box-shadow: 0 0 0 1px rgba(130, 130, 130, .55), 0 0 6px 2px rgba(0, 0, 0, .4);
}
.dialog-head {
    display: flex;
    justify-content: space-between;
    align-items: center;
}
.dialog h2 {
    margin: 0;
    font-size: 28px;
    line-height: 40px;
    font-weight: inherit;
}
.dialog-head button {
    margin-bottom: 4px;
}
.dialog-head svg {
    width: 18px;
    height: 18px;
    stroke: #888;
}
.dialog p {
    margin: 20px 0 18px;
    line-height: 24px;
}
.dialog a {
    color: #4a86e8;
}
.hint {
    color: #666;
    word-spacing: 0;
}
.columns {
    display: flex;
}
.columns fieldset {
    min-width: 0;
    margin: 0;
    padding: 0 0 30px;
    border: none;
    display: flex;
    flex-direction: column;
    gap: 5px;
}
.columns legend {
    padding: 0;
    line-height: 24px;
    margin-bottom: 13px;
}
.open {
    width: 333px;
}
.columns .open {
    padding-right: 32px;
    border-right: 1px solid #ddd;
}
.columns .edit {
    flex: 1;
    padding-left: 31px;
}
.field {
    display: flex;
    align-items: center;
    justify-content: space-between;
    white-space: nowrap;
}
.box {
    display: flex;
    align-items: center;
    width: 175px;
    height: 35px;
    margin-left: -20px;
    padding: 0 2px 0 3px;
    border: 1px solid #999;
    border-radius: 4px;
    flex-shrink: 0;
}
.box input {
    flex: 1;
    min-width: 0;
    color: #000;
    font-family: "Liberation Sans", sans-serif;
    font-size: 28px;
}
.box svg {
    stroke: #666;
    stroke-width: 1.1;
}
.dialog .note {
    margin: 20px 0 31px;
    white-space: nowrap;
}
.note span {
    color: #555;
}
.apply {
    display: flex;
    width: 110px;
    height: 40px;
    margin-left: auto;
    border-radius: 3px;
    background: #4f86e4;
    color: #fff;
}

/* Red annotations over the dialog */
.mark-box {
    position: absolute;
    left: 14px;
    top: 121px;
    width: 360px;
    height: 132px;
    border: 5px solid #ed1c24;
    border-radius: 2px;
    pointer-events: none;
}
.mark-arrow {
    position: absolute;
    left: 386px;
    top: 8px;
    width: 114px;
    height: 92px;
    fill: #ed1c24;
    stroke: none;
    pointer-events: none;
}
```
